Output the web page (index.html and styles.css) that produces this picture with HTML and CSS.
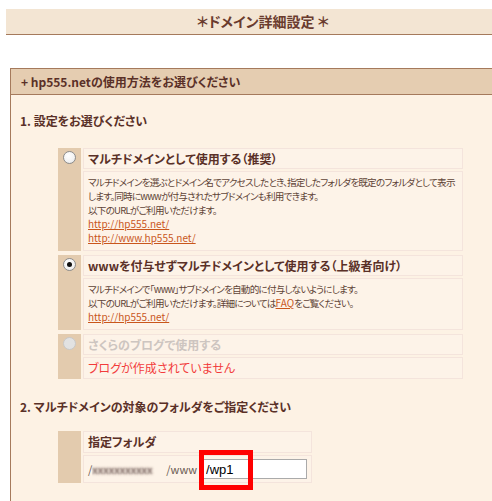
FILE: index.html
```html
<!DOCTYPE html>
<html lang="ja">
<head>
<meta charset="utf-8">
<link rel="stylesheet" href="styles.css">
</head>
<body>
<div class="page-title">＊ドメイン詳細設定 ＊</div>

<div class="panel">
  <div class="panel-head">+ hp555.netの使用方法をお選びください</div>
  <div class="panel-body">
    <h2 class="step">1. 設定をお選びください</h2>
    <div class="options">
      <div class="opt">
        <div class="opt-side"><span class="radio"></span></div>
        <div class="opt-title">マルチドメインとして使用する（推奨）</div>
        <div class="opt-desc">マルチドメインを選ぶとドメイン名でアクセスしたとき、指定したフォルダを既定のフォルダとして表示<br>します。同時にwwwが付与されたサブドメインも利用できます。<br>以下のURLがご利用いただけます。<br><a href="#">http://hp555.net/</a><br><a href="#">http://www.hp555.net/</a></div>
      </div>
      <div class="opt">
        <div class="opt-side"><span class="radio checked"></span></div>
        <div class="opt-title">wwwを付与せずマルチドメインとして使用する（上級者向け）</div>
        <div class="opt-desc">マルチドメインで「www」サブドメインを自動的に付与しないようにします。<br>以下のURLがご利用いただけます。詳細については<a href="#">FAQ</a>をご覧ください。<br><a href="#">http://hp555.net/</a></div>
      </div>
      <div class="opt">
        <div class="opt-side"><span class="radio disabled"></span></div>
        <div class="opt-title disabled">さくらのブログで使用する</div>
        <div class="opt-desc error">ブログが作成されていません</div>
      </div>
    </div>

    <h2 class="step step2">2. マルチドメインの対象のフォルダをご指定ください</h2>
    <div class="folder">
      <div class="opt-side"></div>
      <div class="opt-title">指定フォルダ</div>
      <div class="folder-row">
        <span class="path">/<span class="blur">xxxxxxxxxxx</span>/www</span>
        <span class="input-wrap"><input class="input" type="text" value="/wp1"><span class="mark"></span></span>
      </div>
    </div>
  </div>
</div>
</body>
</html>
```

FILE: styles.css
```css
* { box-sizing: border-box; }
html, body { margin: 0; padding: 0; background: #fff; }
html { height: 501px; overflow: hidden; }
body {
  font-family: "Noto Sans CJK JP", "Noto Sans", sans-serif;
  font-feature-settings: "palt";
  color: #5a3a2e;
  font-size: 11px;
  overflow: hidden;
  height: 501px;
  display: flex;
  flex-direction: column;
}
.page-title {
  flex: none;
  margin: 9px 0 0 6px;
  height: 26px;
  background: #f3e5d3;
  border-bottom: 1px solid #a57a5c;
  text-align: center;
  font-size: 14px;
  font-weight: bold;
  line-height: 25px;
  color: #6a3b2e;
  padding-left: 28px;
}
.panel {
  flex: 1;
  min-height: 0;
  overflow: hidden;
  margin: 33px 0 0 10px;
  border-left: 1px solid #a57a5c;
  border-top: 1px solid #a57a5c;
  background: #fdf2e4;
}
.panel-head {
  height: 26px;
  background: #e5cdb1;
  border-bottom: 1px solid #a57a5c;
  font-size: 12px;
  font-weight: bold;
  line-height: 25px;
  padding-left: 10px;
  color: #5a3027;
}
.panel-body { padding: 17px 0 0 9px; }
.step {
  margin: 0;
  font-size: 12px;
  font-weight: bold;
  line-height: 18px;
  color: #5a3027;
}
.options {
  margin: 18px 0 0 38px;
  width: 405px;
  display: flex;
  flex-direction: column;
  gap: 4px;
}
.opt, .folder {
  display: grid;
  grid-template-columns: 23px 1fr;
  grid-template-rows: auto auto;
  column-gap: 2px;
  row-gap: 2px;
}
.opt-side {
  grid-row: 1 / 3;
  background: #e3cbae;
  padding: 3px 0 0 5px;
}
.opt-title {
  border: 1px solid #f4e4dc;
  background: #fdf3e8;
  font-size: 12px;
  font-weight: bold;
  line-height: 19px;
  padding: 0 0 0 4px;
  color: #5a3027;
  white-space: nowrap;
}
.opt-title.disabled { color: #cdc5c0; }
.opt-desc {
  border: 1px solid #f4e4dc;
  background: #fdf3e8;
  padding: 3px 2px 5px 4px;
  line-height: 14px;
  font-size: 9.6px;
  letter-spacing: -0.8px;
  color: #5f4437;
  white-space: nowrap;
  overflow: hidden;
}
.opt-desc a { color: #c9561c; text-decoration: underline; letter-spacing: 0; font-size: 10px; }
.opt-desc.error { color: #f23b3b; font-size: 12px; line-height: 16px; padding: 2px 4px 2px; letter-spacing: 0; }
.radio {
  display: block;
  width: 13px;
  height: 13px;
  border-radius: 50%;
  border: 1px solid #8c8c8c;
  background: radial-gradient(circle at 40% 35%, #ffffff 0%, #f2f2f2 60%, #dcdcdc 100%);
  position: relative;
}
.radio.checked::after {
  content: "";
  position: absolute;
  left: 3px; top: 3px;
  width: 5px; height: 5px;
  border-radius: 50%;
  background: #111;
}
.radio.disabled {
  border-color: #c8c8c8;
  background: #e2e2e2;
}
.step2 { margin-top: 19px; }
.folder {
  margin: 15px 0 0 38px;
  width: 254px;
}
.folder .opt-title { line-height: 20px; }
.folder-row {
  border: 1px solid #f4e4dc;
  background: #fdf3e8;
  height: 28px;
  display: flex;
  align-items: center;
  padding-left: 4px;
  font-size: 11px;
  color: #6a5a52;
}
.path { white-space: nowrap; }
.blur {
  display: inline-block;
  width: 74px;
  overflow: hidden;
  vertical-align: bottom;
  color: transparent;
  text-shadow: 0 0 3px rgba(110,90,85,1), 0 0 2px rgba(150,130,125,0.8);
}
.input-wrap {
  position: relative;
  margin-left: 6px;
  display: inline-block;
}
.input {
  width: 104px;
  height: 20px;
  border: 1px solid #aaa;
  background: #fff;
  font-family: "Liberation Sans", sans-serif;
  font-size: 13px;
  padding: 0 2px;
  color: #000;
  display: block;
}
.mark {
  position: absolute;
  left: -4px;
  top: -9px;
  width: 54px;
  height: 40px;
  border: 5px solid #ff0000;
}
```
